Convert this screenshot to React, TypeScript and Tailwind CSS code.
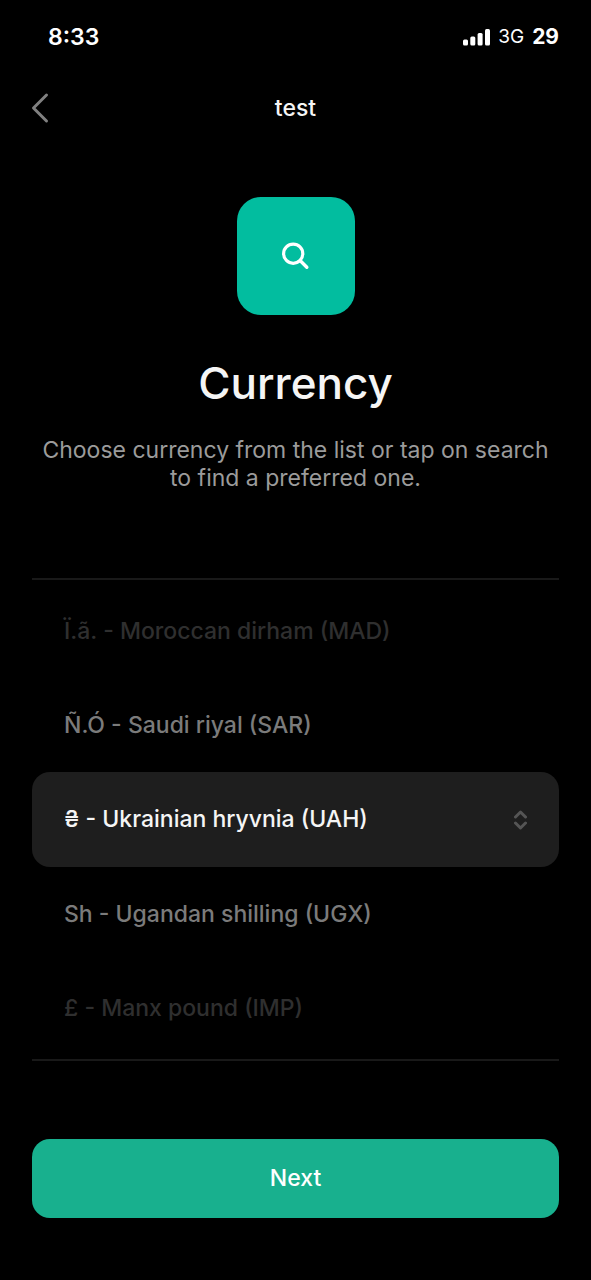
import { useState } from 'react'

const currencies = [
  { code: 'MAD', label: 'Ï.ã. - Moroccan dirham (MAD)' },
  { code: 'SAR', label: 'Ñ.Ó - Saudi riyal (SAR)' },
  { code: 'UAH', label: '₴ - Ukrainian hryvnia (UAH)' },
  { code: 'UGX', label: 'Sh - Ugandan shilling (UGX)' },
  { code: 'IMP', label: '£ - Manx pound (IMP)' },
]

// Rows fade out the further they are from the selected one
const rowStyles = [
  'h-[95px] bg-[#1e1e1e] text-[#f5f5f5]',
  'h-[94px] text-[#7b7b7b]',
  'h-[94px] text-[#2f2f2f]',
]

function StatusBar() {
  return (
    <div className="flex h-[74px] items-center justify-between pl-12 pr-8 text-white">
      <span className="text-[23px] font-semibold">8:33</span>
      <div className="flex items-center gap-2">
        <svg width="27" height="18" viewBox="0 0 27 18" fill="currentColor" aria-hidden="true">
          <rect x="0" y="11.5" width="5" height="6" rx="1.5" />
          <rect x="7.3" y="8.5" width="5" height="9" rx="1.5" />
          <rect x="14.6" y="5" width="5" height="12.5" rx="1.5" />
          <rect x="22" y="1" width="5" height="16.5" rx="1.5" />
        </svg>
        <span className="text-[19px]">3G</span>
        <span className="text-[21px] font-bold">29</span>
      </div>
    </div>
  )
}

function Header() {
  return (
    <header className="grid h-[68px] grid-cols-[32px_1fr_32px] items-center px-6">
      <button type="button" aria-label="Back" className="flex h-10 items-center justify-center text-[#808080]">
        <svg width="32" height="32" viewBox="0 0 32 32" fill="none" aria-hidden="true">
          <path
            d="M22.5 3L9.5 16L22.5 29"
            stroke="currentColor"
            strokeWidth="3"
            strokeLinecap="round"
            strokeLinejoin="round"
          />
        </svg>
      </button>
      <h2 className="text-center text-[23px] font-medium text-[#f5f5f5]">test</h2>
    </header>
  )
}

export default function App() {
  const [selected, setSelected] = useState('UAH')
  const selectedIndex = currencies.findIndex((c) => c.code === selected)

  return (
    <div className="flex min-h-screen flex-col bg-black font-['Inter',sans-serif]">
      <StatusBar />
      <Header />

      <main className="flex flex-1 flex-col px-8 pt-[55px] pb-[62px]">
        {/* Search and intro text */}
        <section className="flex flex-col items-center text-center">
          <button
            type="button"
            aria-label="Search"
            className="flex size-[118px] items-center justify-center rounded-3xl bg-[#02bd9f] text-white"
          >
            <svg width="30" height="30" viewBox="0 0 30 30" fill="none" aria-hidden="true">
              <circle cx="12.2" cy="12.7" r="9.6" stroke="currentColor" strokeWidth="3.2" />
              <path d="M19.3 19.8L25.8 26.3" stroke="currentColor" strokeWidth="3.4" strokeLinecap="round" />
            </svg>
          </button>
          <h1 className="mt-10 text-[44px] leading-[56px] font-medium text-[#f5f5f5]">Currency</h1>
          <p className="mt-[25px] text-[23px] leading-7 text-[#9b9b9b]">
            Choose currency from the list or tap on search to find a preferred one.
          </p>
        </section>

        {/* Currency picker */}
        <fieldset aria-label="Currency" className="mt-[86px] border-y-2 border-[#191919] py-1">
          {currencies.map((currency, index) => (
            <label
              key={currency.code}
              className={`flex cursor-pointer items-center justify-between rounded-[18px] px-8 text-[23px] font-medium ${
                rowStyles[Math.min(Math.abs(index - selectedIndex), 2)]
              }`}
            >
              <input
                type="radio"
                name="currency"
                value={currency.code}
                checked={currency.code === selected}
                onChange={() => setSelected(currency.code)}
                className="sr-only"
              />
              {currency.label}
              {currency.code === selected && (
                <svg width="13" height="20" viewBox="0 0 13 20" fill="none" className="text-[#555555]" aria-hidden="true">
                  <path
                    d="M1.5 7L6.5 2L11.5 7M1.5 13L6.5 18L11.5 13"
                    stroke="currentColor"
                    strokeWidth="3"
                    strokeLinecap="round"
                    strokeLinejoin="round"
                  />
                </svg>
              )}
            </label>
          ))}
        </fieldset>

        <button
          type="button"
          className="mt-auto h-[79px] rounded-[18px] bg-[#18b08e] text-[23px] font-medium text-white"
        >
          Next
        </button>
      </main>
    </div>
  )
}
